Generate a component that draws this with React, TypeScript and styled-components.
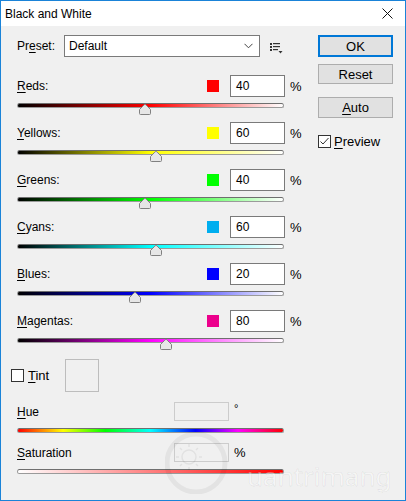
import React from "react";
import styled, { createGlobalStyle } from "styled-components";

const GlobalStyle = createGlobalStyle`
	html, body {
		margin: 0;
		padding: 0;
		background: #f0f0f0;
	}
	body {
		font-family: "Liberation Sans", Arial, sans-serif;
		font-size: 12px;
		color: #000;
	}
`;

const Window = styled.div`
	position: relative;
	box-sizing: border-box;
	width: 406px;
	height: 501px;
	border: 1px solid #1a83d8;
	background: #f0f0f0;
	overflow: hidden;
`;

const TitleBar = styled.div`
	display: flex;
	align-items: center;
	height: 25px;
	background: #ffffff;
	padding-left: 4px;
`;

const Title = styled.div`
	flex: 1;
	font-size: 12px;
`;

const CloseBox = styled.div`
	display: flex;
	align-items: center;
	justify-content: center;
	width: 46px;
	height: 25px;
	margin-right: -5px;
`;

const Body = styled.div`
	display: flex;
	padding-top: 9px;
`;

const Main = styled.div`
	display: flex;
	flex-direction: column;
	width: 286px;
	padding-left: 16px;
`;

const Side = styled.div`
	display: flex;
	flex-direction: column;
	width: 75px;
	margin-left: 15px;
`;

const PresetRow = styled.div`
	display: flex;
	align-items: center;
	height: 22px;
	margin-bottom: 18px;
`;

const PresetLabel = styled.span`
	width: 47px;
`;

const Select = styled.div`
	box-sizing: border-box;
	display: flex;
	align-items: center;
	width: 196px;
	height: 22px;
	border: 1px solid #7a7a7a;
	background: #fff;
	padding: 0 6px 0 4px;
`;

const SelectText = styled.span`
	flex: 1;
`;

const MenuIcon = styled.div`
	display: flex;
	margin-left: 10px;
	margin-top: 4px;
`;

const ChannelRow = styled.div`
	display: flex;
	flex-direction: column;
	height: 47px;
`;

const Header = styled.div<{ $trail?: number }>`
	display: flex;
	align-items: center;
	height: ${(p) => (p.$trail ? 19 : 22)}px;
	padding-right: ${(p) => p.$trail ?? 0}px;
`;

const Label = styled.span`
	flex: 1;
`;

const Key = styled.span`
	text-decoration: underline;
	text-underline-offset: 2px;
`;

const Swatch = styled.div<{ $color: string }>`
	width: 12px;
	height: 12px;
	background: ${(p) => p.$color};
`;

const ValueBox = styled.div<{ $disabled?: boolean }>`
	box-sizing: border-box;
	display: flex;
	align-items: center;
	width: 55px;
	height: 100%;
	margin-left: 11px;
	padding-left: 5px;
	background: ${(p) => (p.$disabled ? "#f0f0f0" : "#fff")};
	border: 1px solid ${(p) => (p.$disabled ? "#cccccc" : "#7a7a7a")};
`;

const Unit = styled.span<{ $raise?: boolean }>`
	width: 13px;
	margin-left: 5px;
	font-size: ${(p) => (p.$raise ? 11 : 13)}px;
	align-self: ${(p) => (p.$raise ? "flex-start" : "center")};
`;

const Track = styled.div<{ $gradient: string; $gap: number }>`
	position: relative;
	box-sizing: border-box;
	width: 267px;
	height: 5px;
	margin-top: ${(p) => p.$gap}px;
	border: 1px solid #9a9a9a;
	border-top-color: #6f6f6f;
	border-radius: 3px;
	background: ${(p) => p.$gradient};
`;

const Thumb = styled.svg`
	position: absolute;
	top: 0px;
	margin-left: -6px;
`;

const TintRow = styled.div`
	display: flex;
	align-items: center;
	margin-top: 2px;
	margin-left: -6px;
	height: 33px;
`;

const CheckBox = styled.div`
	box-sizing: border-box;
	display: flex;
	align-items: center;
	justify-content: center;
	width: 13px;
	height: 13px;
	border: 1px solid #333;
	background: #fff;
`;

const TintLabel = styled.span`
	width: 37px;
	margin-left: 4px;
	font-size: 13px;
`;

const TintBox = styled.div`
	box-sizing: border-box;
	width: 34px;
	height: 33px;
	border: 1px solid #bdbdbd;
`;

const Param = styled.div<{ $top: number }>`
	display: flex;
	flex-direction: column;
	margin-top: ${(p) => p.$top}px;
`;

const Button = styled.div<{ $primary?: boolean; $top: number; $h: number }>`
	box-sizing: border-box;
	display: flex;
	align-items: center;
	justify-content: center;
	height: ${(p) => p.$h}px;
	margin-top: ${(p) => p.$top}px;
	background: #e1e1e1;
	border: ${(p) => (p.$primary ? "2px solid #0078d7" : "1px solid #adadad")};
	font-size: 13px;
`;

const PreviewRow = styled.div`
	display: flex;
	align-items: center;
	margin-top: 16px;
	gap: 3px;
	font-size: 13px;
`;

const Watermark = styled.div`
	position: absolute;
	left: 164px;
	top: 431px;
	display: flex;
	align-items: flex-start;
	pointer-events: none;
`;

const WatermarkText = styled.span`
	margin-left: 18px;
	margin-top: 33px;
	font-family: "Noto Sans", sans-serif;
	font-size: 26px;
	line-height: 22px;
	color: rgba(255, 255, 255, 0.35);
	-webkit-text-stroke: 1px rgba(0, 0, 0, 0.06);
`;

interface Channel {
	name: string;
	key: string;
	color: string;
	ramp: string;
	value: number;
}

const channels: Channel[] = [
	{ name: "Reds", key: "R", color: "#ff0000", ramp: "#ff0000", value: 40 },
	{ name: "Yellows", key: "Y", color: "#ffff00", ramp: "#ffff00", value: 60 },
	{ name: "Greens", key: "G", color: "#00ff00", ramp: "#00ff00", value: 40 },
	{ name: "Cyans", key: "C", color: "#00aeef", ramp: "#00ffff", value: 60 },
	{ name: "Blues", key: "B", color: "#0000ff", ramp: "#0000ff", value: 20 },
	{ name: "Magentas", key: "M", color: "#ec008c", ramp: "#ff00ff", value: 80 },
];

const ramp = (mid: string) => `linear-gradient(to right, #000 0%, ${mid} 50%, #fff 100%)`;

const hueRamp =
	"linear-gradient(to right, #f00 0%, #ff0 17%, #0f0 33%, #0ff 50%, #00f 67%, #f0f 83%, #f00 100%)";

const satRamp = "linear-gradient(to right, #fff 0%, #f00 100%)";

const ThumbShape = ({ value }: { value: number }) => {
	// slider range is -200..300
	const pct = ((value + 200) / 500) * 100;
	return (
		<Thumb width="12" height="11" viewBox="0 0 12 11" style={{ left: `${pct}%` }}>
			<path
				d="M6 0.5 Q6.6 0.5 7.2 1.2 L11.5 5.5 L11.5 9.5 Q11.5 10.5 10.5 10.5 L1.5 10.5 Q0.5 10.5 0.5 9.5 L0.5 5.5 L4.8 1.2 Q5.4 0.5 6 0.5 Z"
				fill="#e6e6e6"
				stroke="#808080"
			/>
		</Thumb>
	);
};

const Labelled = ({ text, k }: { text: string; k: string }) => {
	const i = text.indexOf(k);
	return (
		<>
			{text.slice(0, i)}
			<Key>{k}</Key>
			{text.slice(i + 1)}
		</>
	);
};

const App = () => {
	return (
		<>
			<GlobalStyle />
			<Window>
				<TitleBar>
					<Title>Black and White</Title>
					<CloseBox>
						<svg width="11" height="11" viewBox="0 0 11 11">
							<path d="M0.5 0.5 L10.5 10.5 M10.5 0.5 L0.5 10.5" stroke="#111" strokeWidth="1" />
						</svg>
					</CloseBox>
				</TitleBar>

				<Body>
					<Main>
						<PresetRow>
							<PresetLabel>
								<Labelled text="Preset:" k="e" />
							</PresetLabel>
							<Select>
								<SelectText>Default</SelectText>
								<svg width="9" height="6" viewBox="0 0 9 6">
									<path d="M0.5 0.8 L4.5 4.8 L8.5 0.8" fill="none" stroke="#444" />
								</svg>
							</Select>
							<MenuIcon>
								<svg width="13" height="11" viewBox="0 0 13 11">
									<rect x="0" y="0" width="2" height="2" fill="#333" />
									<rect x="0" y="3" width="2" height="2" fill="#333" />
									<rect x="0" y="6" width="2" height="2" fill="#333" />
									<rect x="3" y="0" width="7" height="1.2" fill="#333" />
									<rect x="3" y="3" width="7" height="1.2" fill="#333" />
									<rect x="3" y="6" width="5" height="1.2" fill="#333" />
									<path d="M8.5 8 L12.5 8 L10.5 10.5 Z" fill="#333" />
								</svg>
							</MenuIcon>
						</PresetRow>

						{channels.map((c) => (
							<ChannelRow key={c.name}>
								<Header>
									<Label>
										<Labelled text={c.name + ":"} k={c.key} />
									</Label>
									<Swatch $color={c.color} />
									<ValueBox>{c.value}</ValueBox>
									<Unit>%</Unit>
								</Header>
								<Track $gradient={ramp(c.ramp)} $gap={6}>
									<ThumbShape value={c.value} />
								</Track>
							</ChannelRow>
						))}

						<TintRow>
							<CheckBox />
							<TintLabel>
								<Key>T</Key>int
							</TintLabel>
							<TintBox />
						</TintRow>

						<Param $top={10}>
							<Header $trail={56}>
								<Label>
									<Key>H</Key>ue
								</Label>
								<ValueBox $disabled />
								<Unit $raise>°</Unit>
							</Header>
							<Track $gradient={hueRamp} $gap={7} />
						</Param>

						<Param $top={10}>
							<Header $trail={56}>
								<Label>
									<Key>S</Key>aturation
								</Label>
								<ValueBox $disabled />
								<Unit>%</Unit>
							</Header>
							<Track $gradient={satRamp} $gap={7} />
						</Param>
					</Main>

					<Side>
						<Button $primary $top={0} $h={22}>
							OK
						</Button>
						<Button $top={7} $h={20}>
							Reset
						</Button>
						<Button $top={13} $h={21}>
							<Key>A</Key>uto
						</Button>
						<PreviewRow>
							<CheckBox>
								<svg width="11" height="11" viewBox="0 0 11 11">
									<path d="M1.5 5.5 L4 8 L9.5 2" fill="none" stroke="#333" strokeWidth="1" />
								</svg>
							</CheckBox>
							<span>
								<Key>P</Key>review
							</span>
						</PreviewRow>
					</Side>
				</Body>

				<Watermark>
					<svg width="64" height="62" viewBox="0 0 64 62">
						<circle cx="31" cy="31" r="29" fill="none" stroke="rgba(0,0,0,0.05)" strokeWidth="5" />
						<circle cx="24" cy="25" r="7" fill="none" stroke="rgba(0,0,0,0.06)" strokeWidth="1.5" />
						<path
							d="M24 12 V15 M24 35 V38 M11 25 H14 M34 25 H37 M15 16 L17 18 M31 32 L33 34 M15 34 L17 32 M31 18 L33 16"
							stroke="rgba(0,0,0,0.06)"
							strokeWidth="1.5"
						/>
					</svg>
					<WatermarkText>uantrimang</WatermarkText>
				</Watermark>
			</Window>
		</>
	);
};

export default App;
